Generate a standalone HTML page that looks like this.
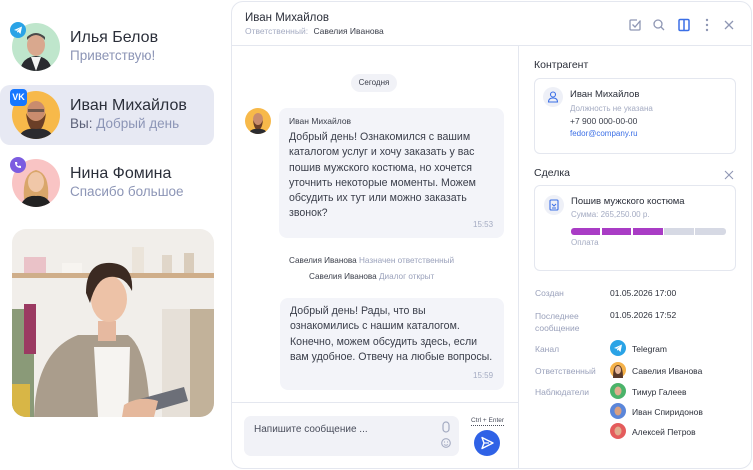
<!DOCTYPE html>
<html><head><meta charset="utf-8">
<style>
*{box-sizing:border-box;margin:0;padding:0}
body{width:753px;height:470px;background:#fff;font-family:"Liberation Sans",sans-serif;position:relative;overflow:hidden;color:#2b2f3a}
.a{position:absolute}
.row{position:absolute;left:0;width:214px;height:60px;border-radius:10px}
.av{position:absolute;border-radius:50%;overflow:hidden}
.nm{position:absolute;left:70px;font-size:16px;color:#2b2f3a}
.sb{position:absolute;left:70px;font-size:13.5px;color:#8c95b6}
.badge{position:absolute;width:16px;height:16px;border-radius:50%}
.panel{position:absolute;left:231px;top:1px;width:521px;height:468px;border:1px solid #e4e7ef;border-radius:12px;background:#fff}
.bub{position:absolute;background:#f3f4f9;border-radius:8px}
.lbl{position:absolute;left:535px;font-size:8.5px;color:#9aa1bb}
.val{position:absolute;left:610px;font-size:8.5px;color:#2b2f3a}
.mini{position:absolute;left:610px;width:16px;height:16px;border-radius:50%}
</style></head><body>

<div class="row" style="top:85px;background:#e7e9f3"></div>

<div class="av" style="left:12px;top:23px;width:48px;height:48px;background:#bfe6cc">
<svg width="48" height="48"><ellipse cx="24" cy="22" rx="9" ry="11" fill="#d9a88e"/><path d="M15 17 Q24 7 33 17 L33 14 Q24 6 15 14Z" fill="#4b4a4a"/><path d="M8 48 Q10 34 24 33 Q38 34 40 48Z" fill="#2a2b30"/><path d="M19 34 L24 48 L29 34Z" fill="#f3f3f3"/></svg></div>
<div class="badge" style="left:10px;top:22px;background:#2aa3e6"><svg width="16" height="16"><path d="M4 8 L12 4.5 L10.5 12 L8 9.5 L7 11 L7 9 L11 5.5 L6.5 8.7Z" fill="#fff"/></svg></div>
<div class="nm" style="top:29px">Илья Белов</div>
<div class="sb" style="top:48px">Приветствую!</div>

<div class="av" style="left:12px;top:91px;width:48px;height:48px;background:#f7b94a">
<svg width="48" height="48"><ellipse cx="24" cy="20" rx="9" ry="10" fill="#c98c6e"/><path d="M14 22 Q16 40 24 41 Q32 40 34 22 Q30 30 24 30 Q18 30 14 22Z" fill="#6b3f27"/><path d="M6 48 Q10 36 24 38 Q38 36 42 48Z" fill="#2b2b2f"/><rect x="16" y="18" width="16" height="3" fill="#333" opacity=".6"/></svg></div>
<div class="a" style="left:10px;top:89px;width:17px;height:17px;border-radius:4px;background:#1677ff;color:#fff;font-size:9px;font-weight:bold;text-align:center;line-height:17px">VK</div>
<div class="nm" style="top:97px">Иван Михайлов</div>
<div class="sb" style="top:116px"><span style="color:#5c6178">Вы:</span> Добрый день</div>

<div class="av" style="left:12px;top:159px;width:48px;height:48px;background:#f9c4c4">
<svg width="48" height="48"><path d="M12 40 Q10 14 24 11 Q38 14 36 40Z" fill="#d9a66a"/><ellipse cx="24" cy="23" rx="8" ry="10" fill="#f0c7a8"/><path d="M8 48 Q12 36 24 37 Q36 36 40 48Z" fill="#222"/></svg></div>
<div class="badge" style="left:10px;top:157px;background:#7c5ce0"><svg width="16" height="16"><path d="M5 5 Q5 11 11 11 L11 9 L9.5 8.5 L8.7 9.3 Q6.7 8.3 6.7 7.3 L7.5 6.5 L7 5Z" fill="#fff"/></svg></div>
<div class="nm" style="top:165px">Нина Фомина</div>
<div class="sb" style="top:184px">Спасибо большое</div>

<div class="a" style="left:12px;top:229px;width:202px;height:188px;border-radius:14px;overflow:hidden;background:#f1eeea">
<svg width="202" height="188">
<rect x="0" y="44" width="202" height="5" fill="#cfae8a"/>
<rect x="12" y="28" width="22" height="16" fill="#eac2c8"/><rect x="50" y="34" width="20" height="10" fill="#f7f4f0"/><rect x="120" y="18" width="12" height="26" fill="#ebe4da"/><rect x="150" y="26" width="10" height="18" fill="#e0d6c9"/><rect x="172" y="24" width="10" height="20" fill="#d9ccbb"/>
<rect x="0" y="80" width="22" height="108" fill="#8a9a78"/><rect x="12" y="75" width="12" height="50" fill="#9b3a62"/><rect x="150" y="80" width="28" height="108" fill="#e6e0d8"/><rect x="178" y="80" width="24" height="108" fill="#c2b29a"/>
<rect x="0" y="155" width="18" height="33" fill="#d8b646"/>
<path d="M22 188 Q24 122 66 106 L116 106 Q136 120 138 188Z" fill="#aa9d8c"/>
<path d="M70 118 L82 118 L86 188 L116 188 L118 118Z" fill="#f6f4f1"/>
<rect x="86" y="92" width="18" height="20" fill="#e6b9a0"/>
<ellipse cx="97" cy="70" rx="18" ry="23" fill="#edc2a7"/>
<path d="M74 64 Q74 32 100 34 Q122 36 120 62 Q112 46 97 48 Q84 50 78 74Z" fill="#3b2a22"/>
<path d="M128 170 L172 158 L176 172 L134 184Z" fill="#6c6f78"/>
<path d="M112 176 Q128 166 146 172 L142 188 L110 188Z" fill="#e5b89c"/>
</svg></div>

<div class="panel"></div>
<div class="a" style="left:232px;top:45px;width:519px;height:1px;background:#e4e7ef"></div>
<div class="a" style="left:518px;top:46px;width:1px;height:422px;background:#e4e7ef"></div>
<div class="a" style="left:232px;top:402px;width:286px;height:1px;background:#e4e7ef"></div>

<div class="a" style="left:245px;top:12px;font-size:11.5px;color:#2b2f3a">Иван Михайлов</div>
<div class="a" style="left:245px;top:26px;font-size:8.5px;color:#a4abc2">Ответственный: <span style="color:#3a3e4a;margin-left:3px">Савелия Иванова</span></div>

<svg class="a" style="left:626px;top:16px" width="120" height="18" viewBox="0 0 120 18">
<g fill="none" stroke="#8f97b4" stroke-width="1.3">
<path d="M14 5 V13 Q14 14 13 14 H5 Q4 14 4 13 V5 Q4 4 5 4 H11"/><path d="M6.5 8.5 L9 11 L14.5 4.5"/>
<circle cx="32" cy="8" r="4"/><path d="M35 11 L38 14"/>
<path d="M99 5 L107 13 M107 5 L99 13"/>
</g>
<rect x="53" y="3.5" width="10" height="11" rx="1.3" fill="none" stroke="#3b6fe6" stroke-width="1.5"/><path d="M58 3.5 V14.5" stroke="#3b6fe6" stroke-width="1.5"/>
<circle cx="81" cy="4" r="1.2" fill="#8f97b4"/><circle cx="81" cy="9" r="1.2" fill="#8f97b4"/><circle cx="81" cy="14" r="1.2" fill="#8f97b4"/>
</svg>

<div class="a" style="left:351px;top:74px;width:46px;height:18px;border-radius:9px;background:#f1f2f7;font-size:8px;color:#3a3e4a;text-align:center;line-height:18px">Сегодня</div>

<div class="av" style="left:245px;top:108px;width:26px;height:26px;background:#f7b94a"><svg width="26" height="26"><ellipse cx="13" cy="11" rx="5" ry="6" fill="#c98c6e"/><path d="M8 12 Q9 22 13 22 Q17 22 18 12 Q16 17 13 17 Q10 17 8 12Z" fill="#6b3f27"/><path d="M3 26 Q6 20 13 21 Q20 20 23 26Z" fill="#2b2b2f"/></svg></div>
<div class="bub" style="left:279px;top:108px;width:225px;height:130px"></div>
<div class="a" style="left:289px;top:116px;font-size:8.5px;color:#3a3e4a">Иван Михайлов</div>
<div class="a" style="left:289px;top:130px;width:210px;font-size:10.6px;line-height:15.3px;color:#3a3e4a">Добрый день! Ознакомился с вашим каталогом услуг и хочу заказать у вас пошив мужского костюма, но хочется уточнить некоторые моменты. Можем обсудить их тут или можно заказать звонок?</div>
<div class="a" style="left:473px;top:220px;font-size:8px;color:#a4abc2">15:53</div>

<div class="a" style="left:289px;top:256px;font-size:8.2px;color:#3a3e4a">Савелия Иванова <span style="color:#9aa1bb">Назначен ответственный</span></div>
<div class="a" style="left:309px;top:272px;font-size:8.2px;color:#3a3e4a">Савелия Иванова <span style="color:#9aa1bb">Диалог открыт</span></div>

<div class="bub" style="left:280px;top:298px;width:224px;height:92px"></div>
<div class="a" style="left:290px;top:304px;width:203px;font-size:10.6px;line-height:15.3px;color:#3a3e4a">Добрый день! Рады, что вы ознакомились с нашим каталогом. Конечно, можем обсудить здесь, если вам удобное. Отвечу на любые вопросы.</div>
<div class="a" style="left:473px;top:371px;font-size:8px;color:#a4abc2">15:59</div>

<div class="a" style="left:244px;top:416px;width:215px;height:40px;border-radius:7px;background:#f1f2f7"></div>
<div class="a" style="left:254px;top:424px;font-size:10px;color:#4a4e5c">Напишите сообщение ...</div>
<svg class="a" style="left:440px;top:421px" width="12" height="30"><rect x="3" y="1" width="6" height="10" rx="3" fill="none" stroke="#a4abc2" stroke-width="1.2"/><circle cx="6" cy="22" r="4.3" fill="none" stroke="#a4abc2" stroke-width="1.1"/><circle cx="4.5" cy="21" r=".6" fill="#a4abc2"/><circle cx="7.5" cy="21" r=".6" fill="#a4abc2"/><path d="M4 23.5 Q6 25 8 23.5" stroke="#a4abc2" fill="none"/></svg>
<div class="a" style="left:471px;top:417px;font-size:6.5px;color:#4a4e5c;border-bottom:1px dotted #4a4e5c;line-height:8px">Ctrl + Enter</div>
<div class="a" style="left:474px;top:430px;width:26px;height:26px;border-radius:50%;background:#2f62e6"><svg width="26" height="26"><path d="M8 7.5 L19 13 L8 18.5 L10 13Z" fill="none" stroke="#fff" stroke-width="1.4" stroke-linejoin="round"/><path d="M10 13 H15" stroke="#fff" stroke-width="1.2"/></svg></div>

<div class="a" style="left:534px;top:59px;font-size:10.5px;color:#2b2f3a">Контрагент</div>
<div class="a" style="left:534px;top:78px;width:202px;height:76px;border:1px solid #e4e7ef;border-radius:6px"></div>
<div class="a" style="left:543px;top:87px;width:20px;height:20px;border-radius:50%;background:#eef0f7"><svg width="20" height="20"><circle cx="10" cy="7.5" r="2.5" fill="none" stroke="#3b6fe6" stroke-width="1.1"/><path d="M5.5 15 Q5.5 11 10 11 Q14.5 11 14.5 15Z" fill="none" stroke="#3b6fe6" stroke-width="1.1"/></svg></div>
<div class="a" style="left:570px;top:89px;font-size:9.5px;color:#2b2f3a">Иван Михайлов</div>
<div class="a" style="left:570px;top:104px;font-size:8px;color:#a4abc2">Должность не указана</div>
<div class="a" style="left:570px;top:116px;font-size:8.5px;color:#3a3e4a">+7 900 000-00-00</div>
<div class="a" style="left:570px;top:129px;font-size:8px;color:#3b6fe6">fedor@company.ru</div>

<div class="a" style="left:534px;top:167px;font-size:10.5px;color:#2b2f3a">Сделка</div>
<svg class="a" style="left:724px;top:170px" width="10" height="10"><path d="M1 1 L9 9 M9 1 L1 9" stroke="#8f97b4" stroke-width="1.1"/></svg>
<div class="a" style="left:534px;top:185px;width:202px;height:86px;border:1px solid #e4e7ef;border-radius:6px"></div>
<div class="a" style="left:544px;top:195px;width:20px;height:20px;border-radius:50%;background:#eef0f7"><svg width="20" height="20"><rect x="6" y="5" width="8" height="10" rx="1" fill="none" stroke="#3b6fe6" stroke-width="1.1"/><path d="M8 9 L10 11 L12 9 M8 13 H12" fill="none" stroke="#3b6fe6" stroke-width="1"/></svg></div>
<div class="a" style="left:571px;top:196px;font-size:9.5px;color:#2b2f3a">Пошив мужского костюма</div>
<div class="a" style="left:571px;top:210px;font-size:8px;color:#a4abc2">Сумма: 265,250.00 р.</div>
<div class="a" style="left:571px;top:228px;width:29px;height:7px;background:#a93cc5;border-radius:3px 0 0 3px"></div>
<div class="a" style="left:602px;top:228px;width:29px;height:7px;background:#a93cc5"></div>
<div class="a" style="left:633px;top:228px;width:30px;height:7px;background:#a93cc5"></div>
<div class="a" style="left:664px;top:228px;width:30px;height:7px;background:#d6d9e4"></div>
<div class="a" style="left:695px;top:228px;width:31px;height:7px;background:#d6d9e4;border-radius:0 3px 3px 0"></div>
<div class="a" style="left:571px;top:238px;font-size:8px;color:#a4abc2">Оплата</div>

<div class="lbl" style="top:288px">Создан</div><div class="val" style="top:288px">01.05.2026 17:00</div>
<div class="lbl" style="top:310px;line-height:12px">Последнее<br>сообщение</div><div class="val" style="top:310px">01.05.2026 17:52</div>
<div class="lbl" style="top:344px">Канал</div>
<div class="mini" style="top:340px;background:#2aa3e6"><svg width="16" height="16"><path d="M4 8 L12 4.5 L10.5 12 L8 9.5 L7 11 L7 9 L11 5.5 L6.5 8.7Z" fill="#fff"/></svg></div>
<div class="val" style="left:632px;top:344px">Telegram</div>
<div class="lbl" style="top:366px">Ответственный</div>
<div class="mini" style="top:362px;background:#f5b24a"><svg width="16" height="16"><path d="M3 16 Q3 3 8 3 Q13 3 13 16Z" fill="#5a3a2a"/><ellipse cx="8" cy="8" rx="3" ry="4" fill="#e7b79a"/></svg></div>
<div class="val" style="left:632px;top:366px">Савелия Иванова</div>
<div class="lbl" style="top:387px">Наблюдатели</div>
<div class="mini" style="top:383px;background:#4bb36a"><svg width="16" height="16"><ellipse cx="8" cy="8" rx="3.5" ry="4.5" fill="#e0ad8e"/></svg></div>
<div class="val" style="left:632px;top:387px">Тимур Галеев</div>
<div class="mini" style="top:403px;background:#5b86d9"><svg width="16" height="16"><ellipse cx="8" cy="8" rx="3.5" ry="4.5" fill="#d9a080"/></svg></div>
<div class="val" style="left:632px;top:407px">Иван Спиридонов</div>
<div class="mini" style="top:423px;background:#e45c5c"><svg width="16" height="16"><ellipse cx="8" cy="8" rx="3.5" ry="4.5" fill="#e0ad8e"/></svg></div>
<div class="val" style="left:632px;top:427px">Алексей Петров</div>

</body></html>
